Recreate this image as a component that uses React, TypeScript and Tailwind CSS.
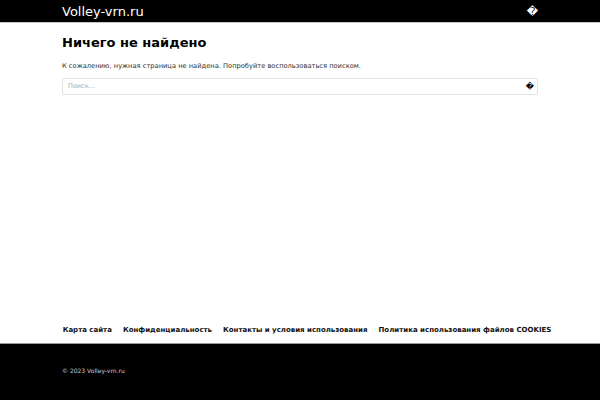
export default function App() {
  const links = [
    "Карта сайта",
    "Конфиденциальность",
    "Контакты и условия использования",
    "Политика использования файлов COOKIES",
  ];

  return (
    <div
      className="flex h-[400px] w-[600px] flex-col bg-white text-black"
      style={{ fontFamily: '"DejaVu Sans", Verdana, sans-serif' }}
    >
      <header className="h-[23px] border-b border-[#c8c8c8] bg-black">
        <div className="mx-auto flex h-[22px] w-[476px] items-center justify-between">
          <span className="text-[13px] leading-none text-white">Volley-vrn.ru</span>
          <span className="text-[11px] leading-none text-white">�</span>
        </div>
      </header>

      <main className="mx-auto w-[476px] flex-1">
        <h1 className="mt-[10px] text-[13px] font-bold leading-[20px]">
          Ничего не найдено
        </h1>
        <p className="mt-[8px] text-[6.7px] leading-[10px] text-[#333]">
          К сожалению, нужная страница не найдена. Попробуйте воспользоваться поиском.
        </p>
        <div className="mt-[7px] flex h-[17px] items-center justify-between rounded-[2px] border border-[#e2e2e2] pl-[5px] pr-[3px]">
          <span className="text-[6.5px] text-[#aaa]">Поиск...</span>
          <span className="text-[8px] leading-none">�</span>
        </div>
      </main>

      <nav className="flex h-[18px] items-start justify-center gap-[11px] pl-[14px]">
        {links.map((l) => (
          <a key={l} className="text-[7px] font-semibold leading-[10px] text-[#111]">
            {l}
          </a>
        ))}
      </nav>

      <footer className="h-[57px] border-t border-[#999] bg-black">
        <div className="mx-auto w-[476px] pt-[22px] text-[6px] text-[#ccc]">
          © 2023 Volley-vrn.ru
        </div>
      </footer>
    </div>
  );
}
